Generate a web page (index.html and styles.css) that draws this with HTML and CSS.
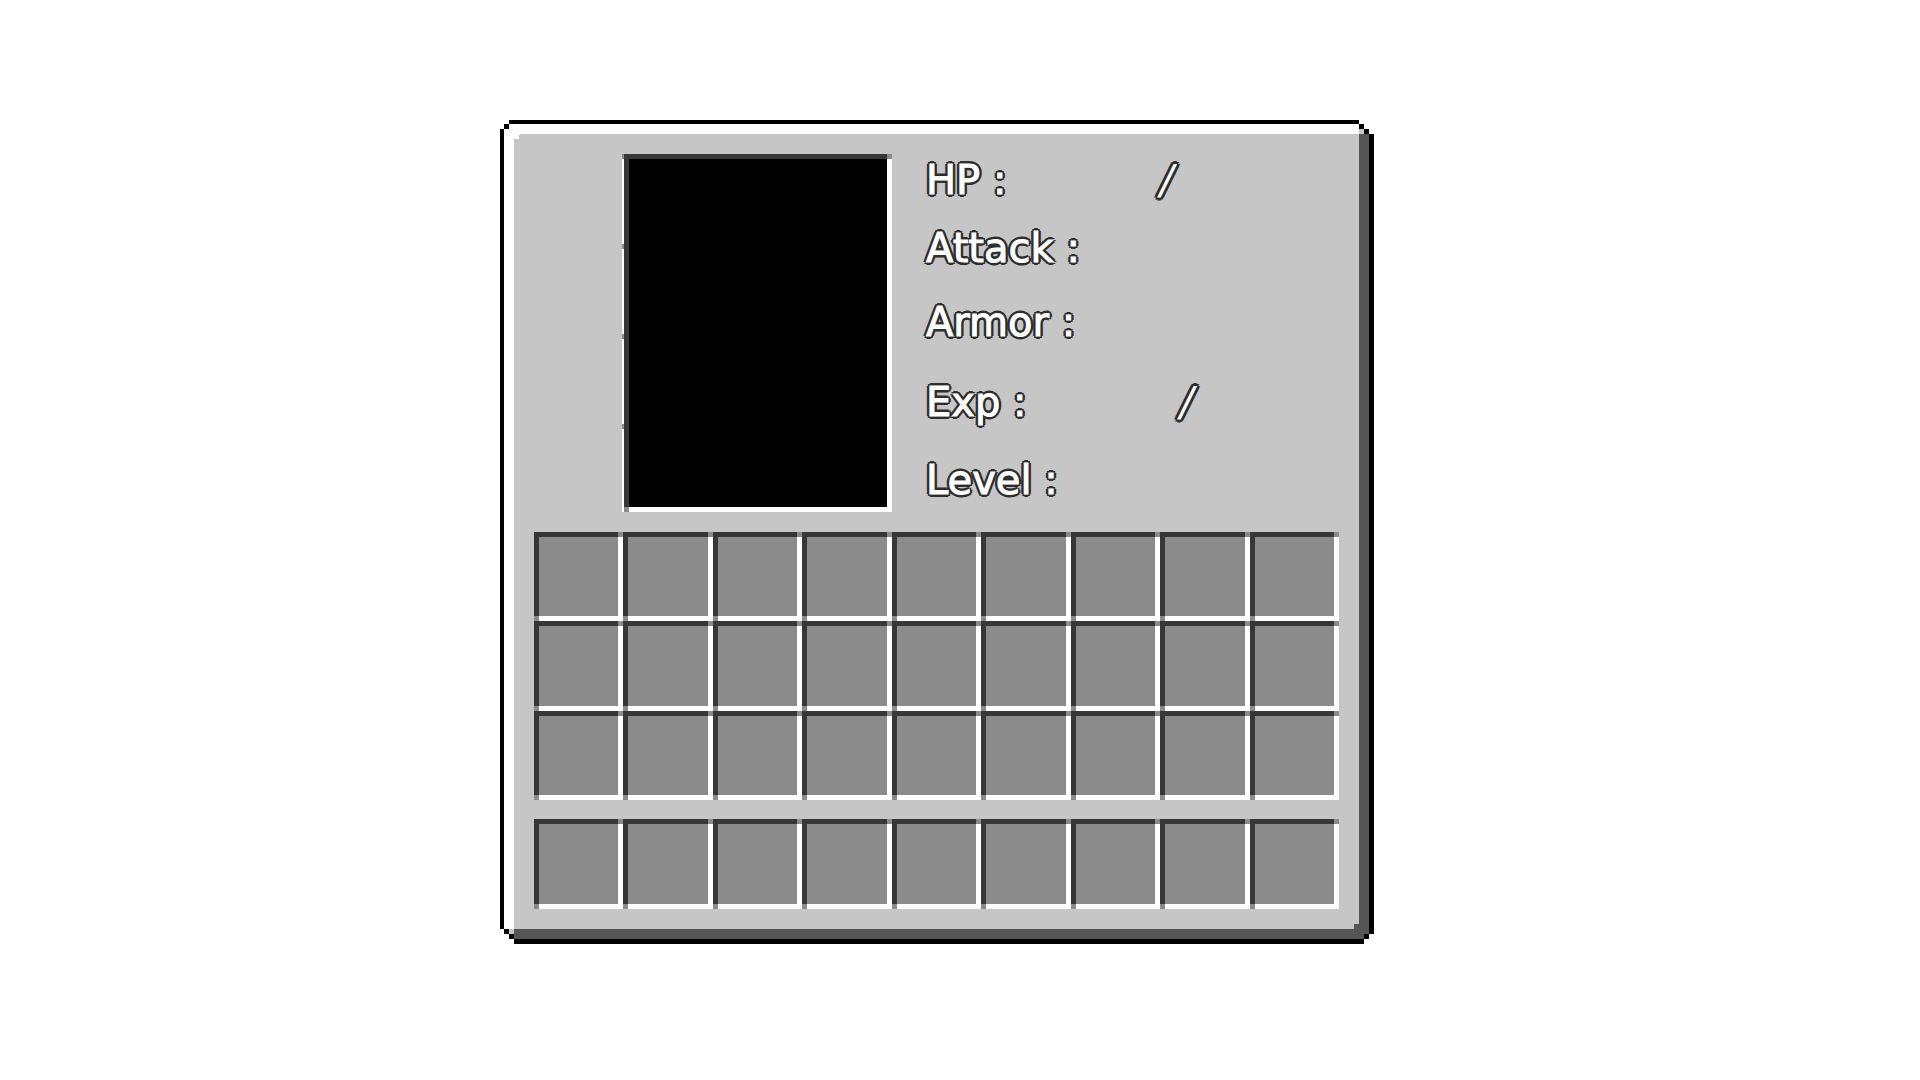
FILE: index.html
```html
<!DOCTYPE html>
<html lang="en">
<head>
<meta charset="utf-8">
<title>Character</title>
<link rel="stylesheet" href="styles.css">
</head>
<body>
<main class="screen">
  <section class="panel">
    <svg class="corner corner-tl" width="20" height="20" viewBox="0 0 20 20" shape-rendering="crispEdges" aria-hidden="true">
      <path fill="#fff" d="M0 0h9v4h11v11h-1v4H4v1H0z"/>
      <path fill="#000" d="M9 0h11v4H9zM4 4h5v5H4zM0 9h4v11H0z"/>
    </svg>
    <svg class="corner corner-tr" width="15" height="15" viewBox="0 0 15 15" shape-rendering="crispEdges" aria-hidden="true">
      <path fill="#fff" d="M0 0h15v14H0z"/>
      <path fill="#c6c6c6" d="M0 9h5v5H0z"/>
      <path fill="#555" d="M0 14h10v1H0z"/>
      <path fill="#000" d="M0 4h5v5H0zM5 9h5v5H5zM10 14h5v1h-5z"/>
    </svg>
    <svg class="corner corner-bl" width="14" height="15" viewBox="0 0 14 15" shape-rendering="crispEdges" aria-hidden="true">
      <path fill="#fff" d="M0 0h14v15H0z"/>
      <path fill="#c6c6c6" d="M9 0h5v5H9z"/>
      <path fill="#000" d="M4 0h5v5H4zM9 5h5v5H9z"/>
    </svg>
    <svg class="corner corner-br" width="20" height="20" viewBox="0 0 20 20" shape-rendering="crispEdges" aria-hidden="true">
      <path fill="#fff" d="M10 10h10v10H10z"/>
      <path fill="#555" d="M0 0h15v10h-5v5H0z"/>
      <path fill="#000" d="M10 10h5v5h-5zM15 0h5v10h-5zM0 15h10v5H0z"/>
    </svg>

    <header class="profile">
      <div class="portrait"></div>
      <dl class="stats">
        <div class="stat"><dt>HP :</dt><dd>/</dd></div>
        <div class="stat"><dt>Attack :</dt><dd></dd></div>
        <div class="stat"><dt>Armor :</dt><dd></dd></div>
        <div class="stat stat-exp"><dt>Exp :</dt><dd>/</dd></div>
        <div class="stat"><dt>Level :</dt><dd></dd></div>
      </dl>
    </header>

    <div class="slots">
      <div class="slot"></div><div class="slot"></div><div class="slot"></div><div class="slot"></div><div class="slot"></div><div class="slot"></div><div class="slot"></div><div class="slot"></div><div class="slot"></div>
      <div class="slot"></div><div class="slot"></div><div class="slot"></div><div class="slot"></div><div class="slot"></div><div class="slot"></div><div class="slot"></div><div class="slot"></div><div class="slot"></div>
      <div class="slot"></div><div class="slot"></div><div class="slot"></div><div class="slot"></div><div class="slot"></div><div class="slot"></div><div class="slot"></div><div class="slot"></div><div class="slot"></div>
    </div>
    <div class="slots hotbar">
      <div class="slot"></div><div class="slot"></div><div class="slot"></div><div class="slot"></div><div class="slot"></div><div class="slot"></div><div class="slot"></div><div class="slot"></div><div class="slot"></div>
    </div>
  </section>
</main>
</body>
</html>
```
FILE: styles.css
```css
:root {
  --face: #c6c6c6;
  --slot: #8b8b8b;
  --shade: #373737;
  --edge: #555;
  --ink: #2e2e2e;
}

* { box-sizing: border-box; }

body {
  margin: 0;
  background: #fff;
  font-family: "DejaVu Sans", sans-serif;
}

/* The panel keeps its share of the window, slightly left of centre */
.screen {
  display: grid;
  grid-template-columns: 500fr 874fr 546fr;
  padding: 120px 0;
}

.panel {
  grid-column: 2;
  position: relative;
  padding: 30px;
  border: solid #000;
  border-width: 4px 5px 5px 4px;
  background: var(--face);
  box-shadow: inset 10px 10px 0 #fff, inset -10px -10px 0 var(--edge);
}

/* Stepped corners over the panel frame */
.corner { position: absolute; display: block; }
.corner-tl { top: -4px; left: -4px; }
.corner-tr { top: -4px; right: -5px; }
.corner-bl { bottom: -5px; left: -4px; }
.corner-br { bottom: -5px; right: -5px; }

.profile {
  display: grid;
  grid-template-columns: 88fr 270fr 447fr;
  margin-bottom: 20px;
}

.portrait {
  grid-column: 2;
  min-height: 358px;
  background:
    linear-gradient(var(--slot), var(--slot)) 2px 100% / 5px 5px no-repeat,
    linear-gradient(var(--slot), var(--slot)) 100% 0 / 5px 5px no-repeat,
    repeating-linear-gradient(var(--slot) 0 5px, #fff 5px 90px) 0 0 / 2px 100% no-repeat,
    linear-gradient(#fff, #fff) 100% 0 / 5px 100% no-repeat,
    linear-gradient(#fff, #fff) 0 100% / 100% 5px no-repeat,
    linear-gradient(var(--shade), var(--shade)) 0 0 / 100% 5px no-repeat,
    linear-gradient(var(--shade), var(--shade)) 0 0 / 7px 100% no-repeat,
    #000;
}

.stats {
  display: grid;
  grid-template-rows: 68px 74px 80px 78px 40px;
  margin: 0;
  padding: 6px 0 0 34px;
  color: #fff;
  font-size: 40px;
  line-height: 40px;
  white-space: nowrap;
  -webkit-text-stroke: 1px #fff;
  text-shadow:
    3px 0 var(--ink), -3px 0 var(--ink), 0 3px var(--ink), 0 -3px var(--ink),
    2px 2px var(--ink), -2px 2px var(--ink), 2px -2px var(--ink), -2px -2px var(--ink);
}

.stat {
  display: grid;
  grid-template-columns: 234px 1fr;
}

.stat-exp { grid-template-columns: 254px 1fr; }

.stat dd {
  margin: 0;
  font-style: oblique;
  -webkit-text-stroke: 0;
}

.slots {
  display: grid;
  grid-template-columns: repeat(9, 1fr);
}

.hotbar { margin-top: 19px; }

.slot {
  aspect-ratio: 1;
  background:
    linear-gradient(var(--slot), var(--slot)) 100% 0 / 5px 5px no-repeat,
    linear-gradient(var(--slot), var(--slot)) 0 100% / 5px 5px no-repeat,
    linear-gradient(var(--shade), var(--shade)) 0 0 / 100% 5px no-repeat,
    linear-gradient(var(--shade), var(--shade)) 0 0 / 5px 100% no-repeat,
    linear-gradient(#fff, #fff) 100% 0 / 5px 100% no-repeat,
    linear-gradient(#fff, #fff) 0 100% / 100% 5px no-repeat,
    var(--slot);
}
```
